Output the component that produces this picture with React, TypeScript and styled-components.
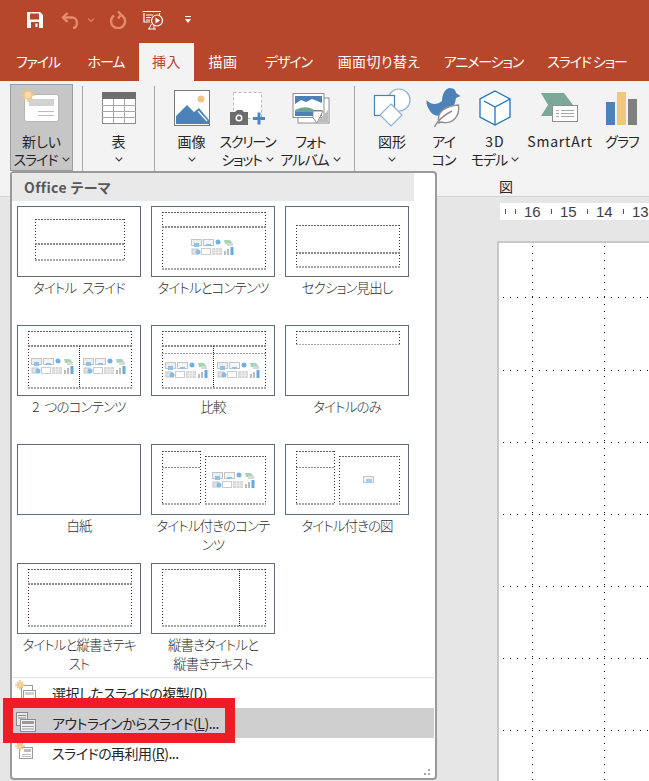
import React from 'react';
import styled, { createGlobalStyle } from 'styled-components';

const GlobalStyle = createGlobalStyle`
  html, body {
    margin: 0;
    padding: 0;
    background: #e6e6e6;
  }
  body {
    font-family: "Noto Sans CJK JP", "Noto Sans", sans-serif;
    font-feature-settings: "palt";
    color: #262626;
  }
`;

const Page = styled.div`
  position: relative;
  width: 649px;
  height: 781px;
  overflow: hidden;
  display: flex;
  flex-direction: column;
`;

const QuickBar = styled.div`
  height: 43px;
  box-sizing: border-box;
  padding: 0 0 4px 26px;
  background: #b7472a;
  display: flex;
  align-items: center;
  flex: none;
`;

const QuickIcon = styled.svg<{ $gap?: number }>`
  display: block;
  margin-right: ${p => p.$gap ?? 0}px;
`;

const TabBar = styled.div`
  height: 38px;
  background: #b7472a;
  display: flex;
  padding-left: 3px;
  flex: none;
`;

const Tab = styled.div<{ $active?: boolean; $width: number; $tight?: boolean }>`
  width: ${p => p.$width}px;
  flex: none;
  text-align: center;
  font-size: 14px;
  line-height: 36px;
  white-space: nowrap;
  letter-spacing: ${p => (p.$tight ? '-1.1px' : '0.4px')};
  color: ${p => (p.$active ? '#b7472a' : '#fff')};
  background: ${p => (p.$active ? '#f3f3f3' : 'transparent')};
`;

const Ribbon = styled.div`
  height: 116px;
  background: #f3f3f3;
  border-bottom: 1px solid #d2d2d2;
  box-sizing: border-box;
  display: flex;
  padding-left: 10px;
  flex: none;
`;

const Separator = styled.div<{ $left: number; $right: number }>`
  width: 1px;
  height: 86px;
  margin: 5px ${p => p.$right}px 0 ${p => p.$left}px;
  background: #a6a6a6;
  flex: none;
`;

const Group = styled.div<{ $width?: number }>`
  display: flex;
  flex-direction: column;
  flex: none;
  width: ${p => (p.$width ? `${p.$width}px` : 'auto')};
`;

const GroupButtons = styled.div`
  display: flex;
`;

const GroupLabel = styled.div`
  font-size: 14px;
  line-height: 18px;
  text-align: center;
  margin-top: 6px;
`;

const RibbonButton = styled.div<{ $width: number; $selected?: boolean }>`
  width: ${p => p.$width}px;
  height: 87px;
  margin-top: 3px;
  box-sizing: border-box;
  display: flex;
  flex-direction: column;
  align-items: center;
  background: ${p => (p.$selected ? '#c6c6c6' : 'transparent')};
  outline: ${p => (p.$selected ? '1px solid #9c9c9c' : 'none')};
  outline-offset: -1px;
  flex: none;
`;

const IconSlot = styled.div`
  height: 48px;
  display: flex;
  justify-content: center;
  flex: none;
`;

const ButtonLine = styled.div<{ $spacing?: number }>`
  font-size: 14px;
  line-height: 18px;
  height: 18px;
  white-space: nowrap;
  display: flex;
  align-items: center;
  gap: 4px;
  letter-spacing: ${p => p.$spacing ?? 0}px;
`;

const Workspace = styled.div`
  flex: 1;
  background: #e6e6e6;
  padding: 6px 0 0 497px;
`;

const Ruler = styled.div`
  width: 149px;
  height: 17px;
  margin-left: 3px;
  padding-left: 5px;
  box-sizing: border-box;
  background: #fff;
  display: flex;
  align-items: center;
  overflow: hidden;
  font-family: "Liberation Sans", sans-serif;
  font-size: 15px;
  line-height: 17px;
  color: #404040;
`;

const RulerStep = styled.div`
  width: 36px;
  flex: none;
  display: flex;
  align-items: center;
`;

const RulerTick = styled.span<{ $after: number }>`
  width: 1px;
  height: 5px;
  background: #555;
  margin-right: ${p => p.$after}px;
  flex: none;
`;

const dotRows = [54, 127, 199, 271, 343, 415, 487];

const Slide = styled.div`
  width: 300px;
  height: 560px;
  margin-top: 21px;
  background-color: #fff;
  border: solid #c8c8c8;
  border-width: 2px 0 0 2px;
  box-sizing: border-box;
`;

const SlideDots = styled.div`
  width: 100%;
  height: 100%;
  background-image:
    repeating-linear-gradient(to bottom, #111 0 1px, transparent 1px 7.2px),
    repeating-linear-gradient(to bottom, #111 0 1px, transparent 1px 7.2px),
    ${dotRows.map(() => 'repeating-linear-gradient(to right, #111 0 1px, transparent 1px 7.2px)').join(',')};
  background-size: 1px 100%, 1px 100%, ${dotRows.map(() => '100% 1px').join(',')};
  background-position: 33px 3px, 105px 3px, ${dotRows.map(y => `4px ${y}px`).join(',')};
  background-repeat: no-repeat;
`;

const Menu = styled.div`
  position: absolute;
  left: 10px;
  top: 171px;
  width: 427px;
  height: 609px;
  box-sizing: border-box;
  background: #fff;
  border: 2px solid #9a9a9a;
  border-radius: 4px;
  display: flex;
  flex-direction: column;
`;

const MenuHeader = styled.div`
  height: 28px;
  width: 402px;
  background: #e9e9e9;
  font-size: 14px;
  font-weight: 700;
  line-height: 28px;
  letter-spacing: 0.4px;
  padding-left: 12px;
  box-sizing: border-box;
  color: #595959;
  flex: none;
`;

const LayoutGrid = styled.div`
  display: grid;
  grid-template-columns: repeat(3, 134px);
  grid-auto-rows: 119px;
  padding: 5px 0 0 5px;
  height: 476px;
  box-sizing: border-box;
  flex: none;
`;

const LayoutCell = styled.div`
  display: flex;
  flex-direction: column;
  align-items: flex-start;
`;

const Thumb = styled.svg`
  display: block;
  flex: none;
`;

const LayoutLabel = styled.div`
  width: 124px;
  margin-top: 1px;
  font-size: 13.5px;
  font-weight: 300;
  line-height: 19px;
  letter-spacing: -0.9px;
  word-spacing: 4px;
  text-align: center;
  white-space: pre-line;
  color: #2e2e2e;
`;

const MenuDivider = styled.div`
  height: 1px;
  margin: 0 1px;
  background: #e3e3e3;
  flex: none;
`;

const MenuItem = styled.div<{ $active?: boolean }>`
  height: 30px;
  margin: 0 1px;
  display: flex;
  align-items: center;
  background: ${p => (p.$active ? '#cfcfcf' : 'transparent')};
  font-size: 14px;
  letter-spacing: -0.5px;
  white-space: nowrap;
  flex: none;
`;

const MenuItemIcon = styled.svg`
  display: block;
  width: 24px;
  height: 28px;
  margin: 0 13px 0 2px;
  flex: none;
`;

const Mnemonic = styled.span`
  text-decoration: underline;
`;

const Grip = styled.svg`
  position: absolute;
  right: 4px;
  bottom: 2px;
`;

const Highlight = styled.div`
  position: absolute;
  left: 3px;
  top: 698px;
  width: 232px;
  height: 45px;
  box-sizing: border-box;
  border: 10px solid #ee1c25;
`;

const Chevron = () => (
  <svg width="8" height="5" viewBox="0 0 8 5">
    <path d="M.7.7 4 4 7.3.7" fill="none" stroke="#404040" strokeWidth="1.2" />
  </svg>
);

const Sun = ({ x, y, r = 5 }: { x: number; y: number; r?: number }) => (
  <g stroke="#eec78a" strokeWidth="1.4">
    <path d={`M${x - r - 2} ${y}H${x + r + 2}M${x} ${y - r - 2}V${y + r + 2}M${x - r} ${y - r}L${x + r} ${y + r}M${x - r} ${y + r}L${x + r} ${y - r}`} />
    <circle cx={x} cy={y} r={r - 1} fill="#f4dcb0" />
  </g>
);

const NewSlideIcon = () => (
  <svg width="63" height="46" viewBox="0 0 63 46">
    <rect x="14.5" y="10.5" width="34" height="27" rx="2" fill="#fff" stroke="#b5b5b5" />
    <rect x="19" y="15" width="25" height="7" fill="#d2d2d2" />
    <path d="M28 27.5H44M28 31.5H44" stroke="#bdbdbd" />
    <Sun x={18} y={11} />
  </svg>
);

const TableIcon = () => (
  <svg width="36" height="46" viewBox="0 0 36 46">
    <rect x="1.5" y="8.5" width="33" height="31" fill="#fff" stroke="#8a8a8a" />
    <rect x="1" y="8" width="34" height="7" fill="#6f6f6f" />
    <path d="M1 21.5H35M1 27.5H35M1 33.5H35M12.5 15V39M23.5 15V39" stroke="#a8a8a8" />
  </svg>
);

const PictureIcon = () => (
  <svg width="38" height="46" viewBox="0 0 38 46">
    <rect x="1.5" y="6.5" width="35" height="35" fill="#fff" stroke="#7a7a7a" />
    <circle cx="28" cy="15" r="3.5" fill="#f0c57f" />
    <path d="M3 40V32L14 21 21 28 26 24 36 36V40Z" fill="#4d82b8" />
    <path d="M25 27 34 37" stroke="#fff" strokeWidth="1.2" />
  </svg>
);

const ScreenshotIcon = () => (
  <svg width="38" height="46" viewBox="0 0 38 46">
    <rect x="4.5" y="8.5" width="28" height="26" fill="#fff" stroke="#bcbcbc" strokeDasharray="3 2" />
    <path d="M1 28H6L8 26H13L15 28H19V41H1Z" fill="#6d6d6d" />
    <circle cx="10" cy="34" r="3.5" fill="#fff" />
    <circle cx="10" cy="34" r="2" fill="#6d6d6d" />
    <path d="M24 34.5H36M30 28.5V40.5" stroke="#4a86c4" strokeWidth="3" />
  </svg>
);

const AlbumIcon = () => (
  <svg width="38" height="46" viewBox="0 0 38 46">
    <rect x="6" y="14" width="31" height="25" fill="#fff" stroke="#8e8e8e" />
    <rect x="1" y="9.5" width="31" height="24" fill="#fff" stroke="#8e8e8e" />
    <rect x="3" y="12" width="27" height="20" fill="#4d82b8" />
    <path d="M3 20 9 16 14 18 20 15 30 19V26H3Z" fill="#fff" />
    <path d="M3 26Q12 21 21 25V28H3Z" fill="#6ea598" />
    <path d="M21 34V27H31L25 39Z" fill="#fff" stroke="#8e8e8e" />
    <path d="M25 38 36 26V38Z" fill="#bdbdbd" />
  </svg>
);

const ShapesIcon = () => (
  <svg width="40" height="46" viewBox="0 0 40 46">
    <circle cx="27" cy="16" r="11" fill="#fff" stroke="#8fb0d4" strokeWidth="1.2" />
    <rect x="2.5" y="11.5" width="20" height="20" fill="#fff" stroke="#4a80bb" strokeWidth="1.2" />
    <path d="M19 20 30 31 19 42 8 31Z" fill="#fff" stroke="#8fb0d4" strokeWidth="1.2" />
  </svg>
);

const IconsIcon = () => (
  <svg width="38" height="46" viewBox="0 0 38 46">
    <path d="M1.5 16C6 21 12 21 17 17 17 11 20 4 25 4 29 4 31 7 31 9L35.5 12 31 14C30 21 27 27 21 30 14 33 8 32 5 27 3 24 1 20 1.5 16Z" fill="#4d82b8" />
    <path d="M14 39C11 28 20 22 33.5 21 35 32 28 41 16 38Z" fill="#fff" stroke="#8f8f8f" strokeWidth="1.4" />
    <path d="M9.5 43C13 36 19 31 27 27" fill="none" stroke="#8f8f8f" strokeWidth="1.4" />
  </svg>
);

const CubeIcon = () => (
  <svg width="34" height="46" viewBox="0 0 34 46">
    <path d="M17 7 32 15V33L17 41 2 33V15Z" fill="#fff" stroke="#1f74c0" strokeWidth="1.3" />
    <path d="M6 17 17 23 32 15M17 23V41" fill="none" stroke="#1f74c0" strokeWidth="1.3" />
  </svg>
);

const SmartArtIcon = () => (
  <svg width="40" height="46" viewBox="0 0 40 46">
    <path d="M1 9H24L33 21 24 32H1L8 21Z" fill="#7ba897" />
    <rect x="12.5" y="21.5" width="25" height="16" fill="#fff" stroke="#8e8e8e" />
    <path d="M16 26.5H19M21 26.5H34M16 29.5H19M21 29.5H34M16 32.5H19M21 32.5H34" stroke="#a6a6a6" />
  </svg>
);

const ChartIcon = () => (
  <svg width="32" height="46" viewBox="0 0 32 46">
    <rect x="0" y="18" width="9" height="23" fill="#4d82b8" />
    <rect x="11" y="8" width="9" height="33" fill="#eec883" />
    <rect x="22" y="15" width="9" height="26" fill="#808080" />
  </svg>
);

type Box = { x: number; y: number; w: number; h: number };

// placeholder outline: darker top, grey bottom, black dotted sides
const Placeholder = ({ x, y, w, h, thick }: Box & { thick?: boolean }) => (
  <g fill="none" shapeRendering="crispEdges">
    <path d={`M${x} ${y + 0.5}H${x + w}`} stroke="#666" strokeDasharray="2 1" />
    <path d={`M${x + 0.5} ${y}V${y + h}M${x + w - 0.5} ${y}V${y + h}`} stroke="#333" strokeDasharray="1 2" />
    <path d={`M${x} ${y + h - 1}H${x + w}`} stroke="#a8a8a8" strokeWidth={thick === false ? 1 : 2} strokeDasharray="2 1" />
  </g>
);

const ContentGlyph = ({ x, y }: { x: number; y: number }) => (
  <g transform={`translate(${x} ${y})`}>
    <rect x=".5" y=".5" width="10" height="6" fill="#eee" stroke="#c4c4c4" />
    <rect x="12.5" y=".5" width="10" height="6" fill="#f2f6fa" stroke="#c4c4c4" />
    <rect x="3" y="4" width="5" height="4" fill="#8cc2ee" />
    <rect x="15" y="5" width="5" height="2" fill="#8cc2ee" />
    <circle cx="27" cy="3" r="2.5" fill="#6fb1e8" />
    <path d="M33 1H39L42 5H34Z" fill="#a5d4b6" />
    <rect x="36" y="4" width="6" height="3" fill="#d8d8d8" />
    <rect x="1" y="10" width="6" height="5" fill="#e4e4e4" stroke="#c4c4c4" />
    <circle cx="7" cy="13" r="2.5" fill="#7fbdec" />
    <rect x="10.5" y="9.5" width="9" height="6" fill="#fff" stroke="#cccccc" />
    <rect x="21" y="9" width="10" height="7" fill="#d8d8d8" />
    <path d="M22 11.5H30M22 13.5H30M24.5 9V16M27.5 9V16" stroke="#f0f0f0" strokeWidth=".7" />
    <rect x="33" y="12" width="2" height="4" fill="#bcbcbc" />
    <rect x="36" y="10" width="2" height="6" fill="#bcbcbc" />
    <rect x="39.5" y="8" width="3" height="8" fill="#64aae4" />
  </g>
);

const DIVIDER = { stroke: '#8c8c8c', strokeDasharray: '2 1', strokeWidth: 1 };

const titleRow = (
  <>
    <Placeholder x={11} y={6} w={104} h={15} thick={false} />
    <path d="M11 21H115" fill="none" {...DIVIDER} strokeWidth={2} shapeRendering="crispEdges" />
  </>
);

const layouts: { label: string; art: React.ReactNode }[] = [
  {
    label: 'タイトル スライド',
    art: (
      <>
        <Placeholder x={18} y={13} w={90} h={42} />
        <path d="M18 38H108" fill="none" {...DIVIDER} strokeWidth={2} shapeRendering="crispEdges" />
      </>
    ),
  },
  {
    label: 'タイトルとコンテンツ',
    art: (
      <>
        <Placeholder x={11} y={6} w={104} h={58} />
        {titleRow}
        <ContentGlyph x={40} y={33} />
      </>
    ),
  },
  {
    label: 'セクション見出し',
    art: (
      <>
        <Placeholder x={11} y={19} w={104} h={43} />
        <path d="M11 47H115" fill="none" {...DIVIDER} strokeWidth={2} shapeRendering="crispEdges" />
      </>
    ),
  },
  {
    label: '2 つのコンテンツ',
    art: (
      <>
        <Placeholder x={11} y={6} w={104} h={58} />
        {titleRow}
        <path d="M62.5 21V63" stroke="#222" strokeDasharray="1 1" shapeRendering="crispEdges" />
        <ContentGlyph x={14} y={33} />
        <ContentGlyph x={66} y={33} />
      </>
    ),
  },
  {
    label: '比較',
    art: (
      <>
        <Placeholder x={11} y={6} w={104} h={58} />
        {titleRow}
        <path d="M11 28.5H115" stroke="#9c9c9c" strokeDasharray="2 1" shapeRendering="crispEdges" />
        <path d="M62.5 21V63" stroke="#222" strokeDasharray="1 1" shapeRendering="crispEdges" />
        <ContentGlyph x={14} y={37} />
        <ContentGlyph x={66} y={37} />
      </>
    ),
  },
  {
    label: 'タイトルのみ',
    art: <Placeholder x={11} y={6} w={104} h={14} thick={false} />,
  },
  { label: '白紙', art: null },
  {
    label: 'タイトル付きのコンテ\nンツ',
    art: (
      <>
        <Placeholder x={11} y={7} w={39} h={54} />
        <path d="M11 23H50" fill="none" {...DIVIDER} shapeRendering="crispEdges" />
        <Placeholder x={54} y={12} w={61} h={49} />
        <ContentGlyph x={61} y={28} />
      </>
    ),
  },
  {
    label: 'タイトル付きの図',
    art: (
      <>
        <Placeholder x={11} y={7} w={39} h={54} />
        <path d="M11 23H50" fill="none" {...DIVIDER} shapeRendering="crispEdges" />
        <Placeholder x={54} y={12} w={61} h={49} />
        <rect x="78.5" y="32.5" width="10" height="6" fill="#f2f2f2" stroke="#c8c8c8" />
        <rect x="81" y="35" width="6" height="4" fill="#a5cdee" />
      </>
    ),
  },
  {
    label: 'タイトルと縦書きテキ\nスト',
    art: (
      <>
        <Placeholder x={11} y={6} w={104} h={58} />
        {titleRow}
      </>
    ),
  },
  {
    label: '縦書きタイトルと\n縦書きテキスト',
    art: (
      <>
        <Placeholder x={11} y={6} w={104} h={58} />
        <path d="M88.5 6V63" stroke="#222" strokeDasharray="1 1" shapeRendering="crispEdges" />
      </>
    ),
  },
];

const LayoutThumb = ({ art }: { art: React.ReactNode }) => (
  <Thumb width="124" height="71" viewBox="0 0 124 71">
    <rect x=".5" y=".5" width="123" height="70" fill="#fff" stroke="#5f6c80" />
    {art}
  </Thumb>
);

const tabs = [
  { label: 'ファイル', width: 70, tight: true },
  { label: 'ホーム', width: 66, tight: true },
  { label: '挿入', width: 55 },
  { label: '描画', width: 58 },
  { label: 'デザイン', width: 73, tight: true },
  { label: '画面切り替え', width: 108 },
  { label: 'アニメーション', width: 101, tight: true },
  { label: 'スライド ショー', width: 106, tight: true },
];

const App: React.FC = () => {
  return (
    <Page>
      <GlobalStyle />
      <QuickBar>
        <QuickIcon width="18" height="18" viewBox="0 0 18 18" $gap={17}>
          <path d="M1 1H14L17 4V17H1Z" fill="#fff" />
          <rect x="4" y="2.5" width="9" height="6" fill="#b7472a" />
          <rect x="5" y="11" width="8" height="6" fill="#b7472a" />
          <rect x="9.5" y="12.5" width="2" height="3.5" fill="#fff" />
        </QuickIcon>
        <QuickIcon width="18" height="18" viewBox="0 0 18 18" $gap={8}>
          <path d="M6.5 2 2 6.5 6.5 11M2.5 6.5H11C14 6.5 16 9 16 12S14 17 12 17" fill="none" stroke="#e58a70" strokeWidth="2.4" />
        </QuickIcon>
        <QuickIcon width="8" height="18" viewBox="0 0 8 18" $gap={14}>
          <path d="M1 7.5 4 10.5 7 7.5" fill="none" stroke="#dd8066" strokeWidth="1.1" />
        </QuickIcon>
        <QuickIcon width="18" height="18" viewBox="0 0 18 18" $gap={15}>
          <path d="M11 3.5A7 7 0 1 1 5 4.5M9 .5 12 3.5 9 7.500" fill="none" stroke="#e58a70" strokeWidth="2.4" />
        </QuickIcon>
        <QuickIcon width="22" height="20" viewBox="0 0 22 20" $gap={21}>
          <path d="M.5 1.5H19M2 3V12H8M17.5 3V6" fill="none" stroke="#fff" strokeWidth="1.2" />
          <path d="M4 5H11M4 7.5H9M4 10H8" stroke="#fff" />
          <circle cx="15" cy="10.5" r="5.5" fill="none" stroke="#fff" strokeWidth="1.2" />
          <path d="M13.5 7.5 18 10.5 13.5 13.5Z" fill="#fff" />
          <path d="M7 19 9.5 14M12 15V19M6 19H14" stroke="#fff" />
        </QuickIcon>
        <QuickIcon width="6" height="8" viewBox="0 0 6 8">
          <path d="M0 .5H6" stroke="#fff" />
          <path d="M0 3H6L3 7Z" fill="#fff" />
        </QuickIcon>
      </QuickBar>

      <TabBar>
        {tabs.map(t => (
          <Tab key={t.label} $width={t.width} $tight={t.tight} $active={t.label === '挿入'}>
            {t.label}
          </Tab>
        ))}
      </TabBar>

      <Ribbon>
        <RibbonButton $width={63} $selected>
          <IconSlot>
            <NewSlideIcon />
          </IconSlot>
          <ButtonLine>新しい</ButtonLine>
          <ButtonLine $spacing={-1}>
            スライド <Chevron />
          </ButtonLine>
        </RibbonButton>
        <Separator $left={9} $right={0} />
        <RibbonButton $width={71}>
          <IconSlot>
            <TableIcon />
          </IconSlot>
          <ButtonLine>表</ButtonLine>
          <ButtonLine>
            <Chevron />
          </ButtonLine>
        </RibbonButton>
        <Separator $left={0} $right={8} />
        <RibbonButton $width={57}>
          <IconSlot>
            <PictureIcon />
          </IconSlot>
          <ButtonLine>画像</ButtonLine>
          <ButtonLine>
            <Chevron />
          </ButtonLine>
        </RibbonButton>
        <RibbonButton $width={55}>
          <IconSlot>
            <ScreenshotIcon />
          </IconSlot>
          <ButtonLine $spacing={-1.2}>スクリーン</ButtonLine>
          <ButtonLine $spacing={-1.2}>
            ショット <Chevron />
          </ButtonLine>
        </RibbonButton>
        <RibbonButton $width={71}>
          <IconSlot>
            <AlbumIcon />
          </IconSlot>
          <ButtonLine $spacing={-1}>フォト</ButtonLine>
          <ButtonLine $spacing={-1}>
            アルバム <Chevron />
          </ButtonLine>
        </RibbonButton>
        <Separator $left={8} $right={8} />
        <Group $width={286}>
          <GroupButtons>
            <RibbonButton $width={58}>
              <IconSlot>
                <ShapesIcon />
              </IconSlot>
              <ButtonLine>図形</ButtonLine>
              <ButtonLine>
                <Chevron />
              </ButtonLine>
            </RibbonButton>
            <RibbonButton $width={45}>
              <IconSlot>
                <IconsIcon />
              </IconSlot>
              <ButtonLine $spacing={-1}>アイ</ButtonLine>
              <ButtonLine $spacing={-1}>コン</ButtonLine>
            </RibbonButton>
            <RibbonButton $width={58}>
              <IconSlot>
                <CubeIcon />
              </IconSlot>
              <ButtonLine $spacing={1}>3D</ButtonLine>
              <ButtonLine $spacing={-1}>
                モデル <Chevron />
              </ButtonLine>
            </RibbonButton>
            <RibbonButton $width={72}>
              <IconSlot>
                <SmartArtIcon />
              </IconSlot>
              <ButtonLine $spacing={0.8}>SmartArt</ButtonLine>
            </RibbonButton>
            <RibbonButton $width={52}>
              <IconSlot>
                <ChartIcon />
              </IconSlot>
              <ButtonLine $spacing={-1}>グラフ</ButtonLine>
            </RibbonButton>
          </GroupButtons>
          <GroupLabel>図</GroupLabel>
        </Group>
      </Ribbon>

      <Workspace>
        <Ruler>
          <RulerTick $after={9} />
          {['16', '15', '14', '13'].map(n => (
            <RulerStep key={n}>
              <RulerTick $after={8} />
              {n}
            </RulerStep>
          ))}
        </Ruler>
        <Slide>
          <SlideDots />
        </Slide>
      </Workspace>

      <Menu>
        <MenuHeader>Office テーマ</MenuHeader>
        <LayoutGrid>
          {layouts.map(l => (
            <LayoutCell key={l.label}>
              <LayoutThumb art={l.art} />
              <LayoutLabel>{l.label}</LayoutLabel>
            </LayoutCell>
          ))}
        </LayoutGrid>
        <MenuDivider />
        <MenuItem>
          <MenuItemIcon viewBox="0 0 24 28">
            <rect x="6.5" y="6.5" width="11" height="13" fill="#fff" stroke="#9a9a9a" />
            <rect x="8.5" y="11.5" width="12" height="13" fill="#fff" stroke="#9a9a9a" />
            <rect x="10" y="13" width="9" height="3" fill="#d0d0d0" />
            <Sun x={5} y={6} r={3} />
          </MenuItemIcon>
          <span>
            選択したスライドの複製(<Mnemonic>D</Mnemonic>)
          </span>
        </MenuItem>
        <MenuItem $active>
          <MenuItemIcon viewBox="0 0 24 28">
            <rect x="1.5" y="3.5" width="11" height="13" fill="#e8e8e8" stroke="#8a8a8a" />
            <path d="M3 6.5H11M3 9H11" stroke="#8a8a8a" />
            <rect x="5.5" y="10.5" width="15" height="12" fill="#f4f4f4" stroke="#8a8a8a" />
            <rect x="7" y="12" width="12" height="3" fill="#9a9a9a" />
            <path d="M7 17.5H19M7 20H19" stroke="#9a9a9a" />
          </MenuItemIcon>
          <span>
            アウトラインからスライド(<Mnemonic>L</Mnemonic>)...
          </span>
        </MenuItem>
        <MenuItem>
          <MenuItemIcon viewBox="0 0 24 28">
            <rect x="4.5" y="8.5" width="13" height="11" fill="#fff" stroke="#9a9a9a" />
            <rect x="9" y="10" width="7" height="3" fill="#bdbdbd" />
            <path d="M7 15.5H16M7 17.5H16" stroke="#bdbdbd" />
            <Sun x={5} y={7} r={3} />
          </MenuItemIcon>
          <span>
            スライドの再利用(<Mnemonic>R</Mnemonic>)...
          </span>
        </MenuItem>
        <Grip width="8" height="8" viewBox="0 0 8 8">
          <path d="M5 1h2v2H5zM1 5h2v2H1zM5 5h2v2H5z" fill="#a8a8a8" />
        </Grip>
      </Menu>

      <Highlight />
    </Page>
  );
};

export default App;
